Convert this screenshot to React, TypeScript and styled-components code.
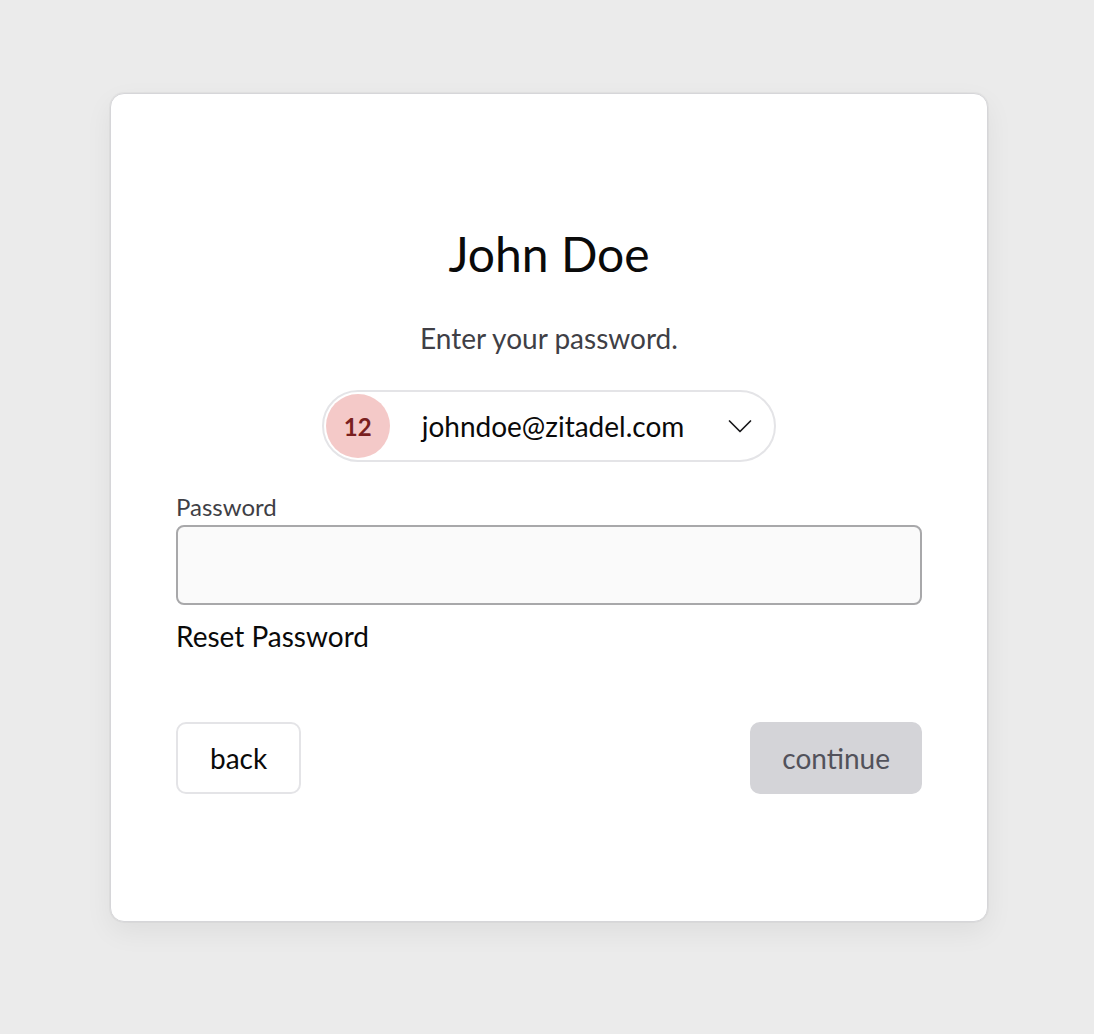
import React from "react";
import styled, { createGlobalStyle } from "styled-components";

const GlobalStyle = createGlobalStyle`
  html, body {
    margin: 0;
    padding: 0;
    background: #ebebeb;
    font-family: Lato, "Open Sans", "Liberation Sans", sans-serif;
  }
  * { box-sizing: border-box; }
`;

const Page = styled.div`
  display: flex;
  justify-content: center;
  padding-top: 93px;
  padding-left: 4px;
  min-height: 1034px;
`;

const Card = styled.main`
  width: 878px;
  height: 829px;
  background: #ffffff;
  border: 1px solid #d6d6d9;
  border-radius: 14px;
  box-shadow: 0 0 0 1px rgba(0, 0, 0, 0.03), 0 10px 28px rgba(0, 0, 0, 0.06);
  padding: 132px 65px 0;
  display: flex;
  flex-direction: column;
`;

const Title = styled.h1`
  margin: 0;
  font-size: 48px;
  line-height: 56px;
  font-weight: 400;
  color: #0a0a0a;
  text-align: center;
`;

const Description = styled.p`
  margin: 36px 0 0;
  font-size: 28px;
  line-height: 40px;
  color: #3f3f46;
  text-align: center;
`;

const PillRow = styled.div`
  display: flex;
  justify-content: center;
  margin-top: 32px;
`;

const Pill = styled.button`
  display: flex;
  align-items: center;
  height: 72px;
  padding: 2px 22px 2px 2px;
  border: 2px solid #e4e4e7;
  border-radius: 999px;
  background: #ffffff;
  font-family: inherit;
  cursor: pointer;
`;

const Avatar = styled.span`
  width: 64px;
  height: 64px;
  border-radius: 50%;
  background: #f4c9c8;
  color: #7a1f1f;
  font-weight: 700;
  font-size: 24px;
  display: flex;
  align-items: center;
  justify-content: center;
`;

const Email = styled.span`
  margin-left: 32px;
  font-size: 28px;
  color: #0a0a0a;
`;

const Chevron = styled.svg`
  margin-left: 44px;
  width: 24px;
  height: 24px;
`;

const Field = styled.div`
  margin-top: 29px;
  display: flex;
  flex-direction: column;
`;

const Label = styled.label`
  font-size: 24px;
  line-height: 32px;
  color: #3f3f46;
`;

const Input = styled.input`
  margin-top: 2px;
  height: 80px;
  width: 100%;
  background: #fafafa;
  border: 2px solid #a8a8aa;
  border-radius: 8px;
  padding: 0 16px;
  font-size: 24px;
  font-family: inherit;
  outline: none;
`;

const ResetLink = styled.a`
  margin-top: 13px;
  align-self: flex-start;
  font-size: 28px;
  line-height: 36px;
  color: #0a0a0a;
  text-decoration: none;
  cursor: pointer;
`;

const Actions = styled.div`
  margin-top: 68px;
  display: flex;
  justify-content: space-between;
  align-items: center;
`;

const Button = styled.button<{ $variant: "secondary" | "primary" }>`
  height: 72px;
  padding: 0 ${(p) => (p.$variant === "secondary" ? "32px" : "30px")};
  border-radius: 10px;
  font-family: inherit;
  font-size: 28px;
  cursor: pointer;
  border: 2px solid ${(p) => (p.$variant === "secondary" ? "#e4e4e7" : "#d4d4d8")};
  background: ${(p) => (p.$variant === "secondary" ? "#ffffff" : "#d4d4d8")};
  color: ${(p) => (p.$variant === "secondary" ? "#0a0a0a" : "#52525b")};
`;

export default function App() {
  return (
    <>
      <GlobalStyle />
      <Page>
        <Card>
          <Title>John Doe</Title>
          <Description>Enter your password.</Description>
          <PillRow>
            <Pill type="button">
              <Avatar>12</Avatar>
              <Email>johndoe@zitadel.com</Email>
              <Chevron viewBox="0 0 24 24" fill="none" stroke="#18181b" strokeWidth="1.7" strokeLinecap="round" strokeLinejoin="round">
                <path d="M1.5 7 L12 17.5 L22.5 7" />
              </Chevron>
            </Pill>
          </PillRow>
          <Field>
            <Label htmlFor="pw">Password</Label>
            <Input id="pw" type="password" />
          </Field>
          <ResetLink>Reset Password</ResetLink>
          <Actions>
            <Button type="button" $variant="secondary">back</Button>
            <Button type="button" $variant="primary">continue</Button>
          </Actions>
        </Card>
      </Page>
    </>
  );
}
